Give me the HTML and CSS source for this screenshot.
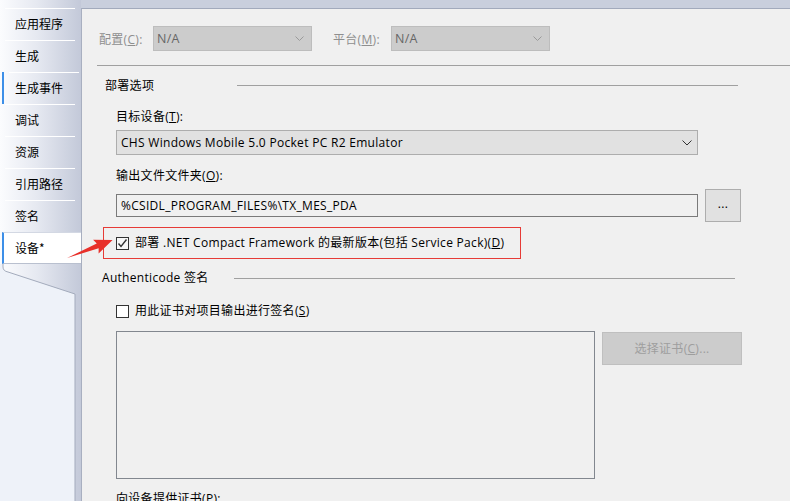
FILE: index.html
```html
<!DOCTYPE html>
<html lang="zh-CN">
<head>
<meta charset="utf-8">
<title>设备</title>
<link rel="stylesheet" href="styles.css">
</head>
<body>
<div class="app">
  <div class="sidebar">
    <div class="tabs">
      <div class="tab">应用程序</div>
      <div class="tab">生成</div>
      <div class="tab focus">生成事件</div>
      <div class="tab">调试</div>
      <div class="tab">资源</div>
      <div class="tab">引用路径</div>
      <div class="tab">签名</div>
      <div class="tab selected">设备*</div>
    </div>
    <svg class="tail" width="81" height="237" viewBox="0 0 81 237">
      <path d="M0,0 L3,0 L3,3 Q3,7 8,8 L75,30 L75,237 L0,237 Z" fill="#eef2f9"/>
      <path d="M3,0 L3,3 Q3,7 8,8 L75,30 L75,237" fill="none" stroke="#a3abbc" stroke-width="1"/>
    </svg>
  </div>

  <div class="main">
    <div class="config-row">
      <span class="dis-label lbl-config">配置(<u>C</u>):</span>
      <div class="dis-select">
        <span>N/A</span>
        <svg class="chev" width="9" height="5" viewBox="0 0 9 5"><polyline points="0.5,0.5 4.5,4.5 8.5,0.5" fill="none" stroke="#9a9a9a" stroke-width="1"/></svg>
      </div>
      <span class="dis-label lbl-platform">平台(<u>M</u>):</span>
      <div class="dis-select">
        <span>N/A</span>
        <svg class="chev" width="9" height="5" viewBox="0 0 9 5"><polyline points="0.5,0.5 4.5,4.5 8.5,0.5" fill="none" stroke="#9a9a9a" stroke-width="1"/></svg>
      </div>
    </div>
    <div class="hr"></div>

    <div class="group-head g1">
      <span class="gh-text">部署选项</span>
      <span class="gh-line"></span>
    </div>
    <div class="field-label fl-target">目标设备(<u>T</u>):</div>
    <div class="combo">
      <span>CHS Windows Mobile 5.0 Pocket PC R2 Emulator</span>
      <svg class="chev" width="10" height="6" viewBox="0 0 10 6"><polyline points="0.5,0.5 5,5 9.5,0.5" fill="none" stroke="#333" stroke-width="1"/></svg>
    </div>
    <div class="field-label fl-output">输出文件文件夹(<u>O</u>):</div>
    <div class="path-row">
      <div class="textbox">%CSIDL_PROGRAM_FILES%\TX_MES_PDA</div>
      <div class="btn-browse">...</div>
    </div>
    <div class="highlight">
      <span class="checkbox checked">
        <svg width="11" height="11" viewBox="0 0 11 11"><polyline points="1.5,5.5 4,8.5 9.5,1.5" fill="none" stroke="#333" stroke-width="1.4"/></svg>
      </span>
      <span class="cb-text">部署 .NET Compact Framework 的最新版本(包括 Service Pack)(<u>D</u>)</span>
    </div>

    <div class="group-head g2">
      <span class="gh-text">Authenticode 签名</span>
      <span class="gh-line"></span>
    </div>
    <div class="cb-row">
      <span class="checkbox"></span>
      <span class="cb-text">用此证书对项目输出进行签名(<u>S</u>)</span>
    </div>
    <div class="cert-row">
      <div class="listbox"></div>
      <div class="btn-cert">选择证书(<u>C</u>)...</div>
    </div>
    <div class="field-label fl-provide">向设备提供证书(<u>P</u>):</div>
  </div>

  <svg class="arrow" width="790" height="501" viewBox="0 0 790 501">
    <g transform="translate(67,258) rotate(-21.5)">
      <polygon points="0,0 33,-2.6 31,-7.5 49,0 31,7.5 33,2.6" fill="#e8302a"/>
    </g>
  </svg>
</div>
</body>
</html>
```

FILE: styles.css
```css
html, body {
  margin: 0;
  padding: 0;
}
body {
  width: 790px;
  height: 501px;
  overflow: hidden;
  background: #c9cfdd;
  font-family: "Open Sans", "Noto Sans CJK SC", sans-serif;
  font-size: 12px;
  color: #000;
}
u { text-decoration: underline; text-underline-offset: 1px; }

.app {
  position: relative;
  display: flex;
  width: 790px;
  height: 501px;
}

/* ---------- sidebar ---------- */
.sidebar {
  width: 81px;
  flex: none;
  display: flex;
  flex-direction: column;
  padding-top: 8px;
  box-sizing: border-box;
  background: linear-gradient(to right, #fbfcfe 0%, #e6e9f1 45%, #c3c9d9 100%);
}
.tabs {
  display: flex;
  flex-direction: column;
  flex: none;
}
.tab {
  height: 32px;
  line-height: 32px;
  padding-left: 15px;
  font-family: "Noto Sans CJK SC", sans-serif;
  font-size: 12px;
  background: linear-gradient(#ffffff, #ffffff) no-repeat 5px 0 / 70px 1px;
}
.tab.focus {
  margin-left: 2px;
  padding-left: 11px;
  border-left: 2px solid #3d8fe8;
}
.tab.selected {
  margin-left: 2px;
  padding-left: 11px;
  border-left: 2px solid #3d8fe8;
  background: #ffffff;
  height: 30px;
  line-height: 30px;
  border-top: 1px solid #d3d8e3;
  border-bottom: 1px solid #b9c0cf;
}
.tail {
  display: block;
  flex: none;
}

/* ---------- main panel ---------- */
.main {
  flex: 1;
  margin-top: 8px;
  background: #f0f0f0;
  border-top: 1px solid #a2aabc;
  border-left: 1px solid #a8afc0;
  display: flex;
  flex-direction: column;
  min-width: 0;
  letter-spacing: 0.3px;
}
.main > * {
  flex: none;
}

.config-row {
  display: flex;
  align-items: center;
  margin-top: 17px;
  padding-left: 17px;
  height: 25px;
}
.dis-label {
  color: #8e8e8e;
}
.lbl-config { width: 54px; }
.lbl-platform { width: 58px; margin-left: 21px; }
.dis-select {
  width: 159px;
  height: 25px;
  box-sizing: border-box;
  background: #cccccc;
  border: 1px solid #bdbdbd;
  display: flex;
  align-items: center;
  justify-content: space-between;
  padding: 0 7px 0 3px;
  color: #666666;
  font-size: 12.5px;
}
.chev { display: block; }

.hr {
  height: 1px;
  background: #a0a0a0;
  margin: 14px 0 0 15px;
}

.group-head {
  display: flex;
  align-items: center;
  height: 16px;
}
.g1 { margin-top: 12px; padding-left: 23px; padding-right: 52px; }
.g2 { margin-top: 11px; padding-left: 20px; padding-right: 55px; }
.gh-text {
  width: 132px;
  flex: none;
  line-height: 16px;
}
.gh-line {
  flex: 1;
  height: 1px;
  background: #a0a0a0;
}
.g1 .gh-line { margin-top: -1px; }

.field-label {
  padding-left: 34px;
  line-height: 16px;
}
.fl-target { margin-top: 15px; }
.fl-output { margin-top: 13px; }
.fl-provide { margin-top: 12px; }

.combo {
  margin: 5px 0 0 34px;
  width: 582px;
  height: 25px;
  box-sizing: border-box;
  background: #e1e1e1;
  border: 1px solid #adadad;
  display: flex;
  align-items: center;
  justify-content: space-between;
  padding: 0 5px 0 4px;
}

.path-row {
  display: flex;
  align-items: center;
  margin: 5px 0 0 34px;
  height: 33px;
}
.textbox {
  width: 582px;
  height: 23px;
  box-sizing: border-box;
  border: 1px solid #7a7a7a;
  background: #f0f0f0;
  padding-left: 4px;
  line-height: 21px;
}
.btn-browse {
  margin-left: 7px;
  width: 36px;
  height: 33px;
  box-sizing: border-box;
  background: #e1e1e1;
  border: 1px solid #adadad;
  text-align: center;
  line-height: 28px;
}

.highlight {
  margin: 5px 0 0 21px;
  width: 418px;
  height: 32px;
  box-sizing: border-box;
  border: 1px solid #e63b36;
  display: flex;
  align-items: center;
  padding-left: 12px;
}
.checkbox {
  width: 13px;
  height: 13px;
  box-sizing: border-box;
  border: 1px solid #333333;
  background: #ffffff;
  display: flex;
  align-items: center;
  justify-content: center;
  flex: none;
}
.checkbox.checked { background: #f7f7f7; }
.cb-text {
  margin-left: 6px;
  line-height: 16px;
  white-space: nowrap;
}
.cb-row {
  display: flex;
  align-items: center;
  margin: 17px 0 0 34px;
  height: 16px;
}

.cert-row {
  display: flex;
  align-items: flex-start;
  margin: 12px 0 0 34px;
}
.listbox {
  width: 479px;
  height: 148px;
  box-sizing: border-box;
  border: 1px solid #82878f;
}
.btn-cert {
  margin: 1px 0 0 7px;
  width: 140px;
  height: 33px;
  box-sizing: border-box;
  background: #cccccc;
  border: 1px solid #bfbfbf;
  color: #9e9e9e;
  text-align: center;
  line-height: 31px;
}

.arrow {
  position: absolute;
  left: 0;
  top: 0;
  pointer-events: none;
}
```
